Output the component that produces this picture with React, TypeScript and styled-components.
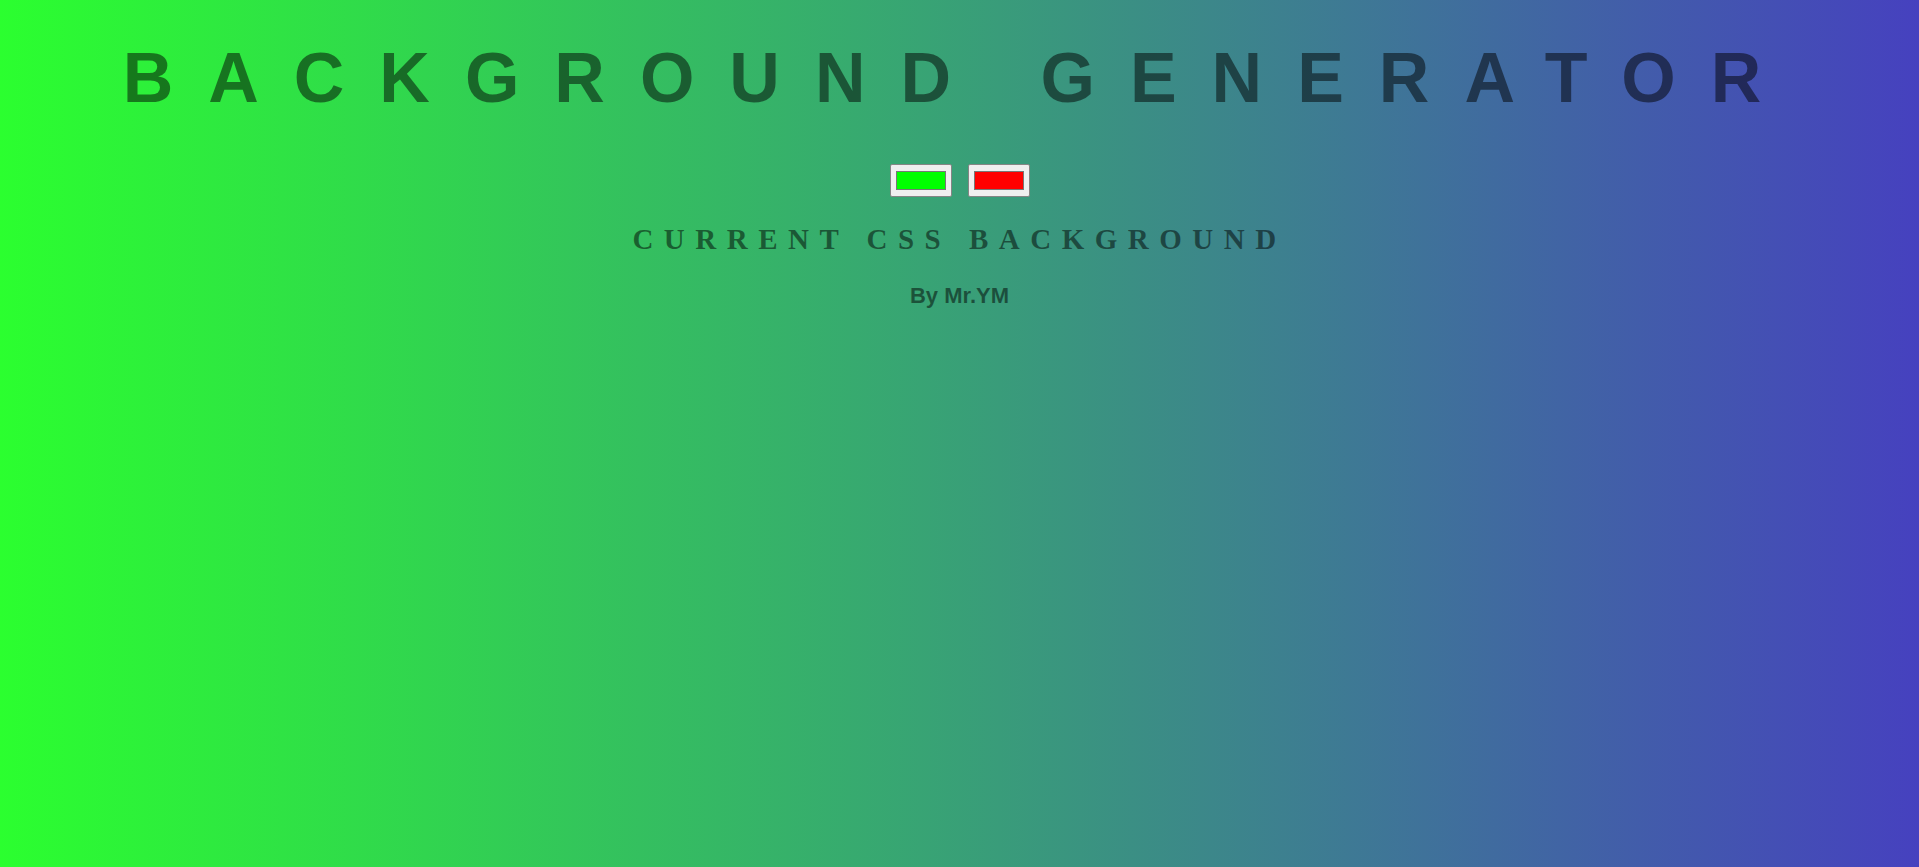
import React, { useState } from "react";
import styled, { createGlobalStyle } from "styled-components";

const GlobalStyle = createGlobalStyle`
  html, body {
    margin: 0;
    padding: 0;
  }
  body {
    font-family: "Liberation Sans", Arial, sans-serif;
  }
`;

const Page = styled.div<{ $from: string; $to: string }>`
  min-height: 100vh;
  box-sizing: border-box;
  background: linear-gradient(to right, ${(p) => p.$from}, ${(p) => p.$to});
  display: flex;
  flex-direction: column;
  align-items: center;
  text-align: center;
  padding-top: 37.5px;
  color: rgba(0, 0, 0, 0.5);
`;

const Title = styled.h1`
  margin: 0;
  font-family: "Liberation Sans", Arial, sans-serif;
  font-weight: 700;
  font-size: 70px;
  line-height: 80px;
  letter-spacing: 35px;
  white-space: nowrap;
`;

const Pickers = styled.div`
  display: flex;
  gap: 16px;
  margin-top: 46.5px;
`;

const ColorInput = styled.input`
  -webkit-appearance: none;
  appearance: none;
  width: 62px;
  height: 33px;
  padding: 0;
  margin: 0;
  box-sizing: border-box;
  border: 1px solid #858585;
  border-radius: 2px;
  background: #efefef;
  cursor: pointer;

  &::-webkit-color-swatch-wrapper {
    padding: 6px 5px;
  }
  &::-webkit-color-swatch {
    border: 1px solid #777777;
    border-radius: 0;
  }
`;

const Subtitle = styled.h3`
  margin: 24.5px 0 0;
  font-family: "Liberation Serif", "Times New Roman", serif;
  font-weight: 700;
  font-size: 29px;
  line-height: 34px;
  letter-spacing: 10.5px;
  white-space: nowrap;
`;

const Byline = styled.p`
  margin: 27px 0 0;
  font-family: "Liberation Sans", Arial, sans-serif;
  font-weight: 700;
  font-size: 22px;
  line-height: 26px;
`;

export default function App() {
  const [c1, setC1] = useState("#00ff00");
  const [c2, setC2] = useState("#ff0000");
  return (
    <>
      <GlobalStyle />
      <Page $from="#2bff2f" $to="#4641bf">
        <Title>BACKGROUND GENERATOR</Title>
        <Pickers>
          <ColorInput type="color" value={c1} onChange={(e) => setC1(e.target.value)} />
          <ColorInput type="color" value={c2} onChange={(e) => setC2(e.target.value)} />
        </Pickers>
        <Subtitle>CURRENT CSS BACKGROUND</Subtitle>
        <Byline>By Mr.YM</Byline>
      </Page>
    </>
  );
}
